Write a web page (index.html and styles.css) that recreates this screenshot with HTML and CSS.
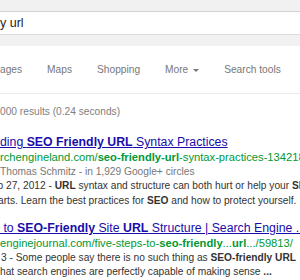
FILE: index.html
```html
<!DOCTYPE html>
<html lang="en">
<head>
    <meta charset="UTF-8">
    <meta name="viewport" content="width=device-width, initial-scale=1.0">
    <title>seo friendly url - Search</title>
    <link rel="stylesheet" href="styles.css">
</head>
<body>
    <div class="topbar">
        <div class="searchbox">y url</div>
    </div>

    <div class="nav">
        <span class="nav-item">ages</span>
        <span class="nav-item">Maps</span>
        <span class="nav-item">Shopping</span>
        <span class="nav-item">More <span class="caret"></span></span>
        <span class="nav-item">Search tools</span>
    </div>

    <div class="stats">000 results (0.24 seconds)</div>

    <div class="result">
        <a class="title" href="#">ding <b>SEO Friendly URL</b> Syntax Practices</a>
        <div class="url">rchengineland.com/<b>seo-friendly-url</b>-syntax-practices-134218</div>
        <div class="byline">Thomas Schmitz - in 1,929 Google+ circles</div>
        <div class="snippet first-line">p 27, 2012 - <b>URL</b> syntax and structure can both hurt or help your <b>SEO</b></div>
        <div class="snippet second-line">arts. Learn the best practices for <b>SEO</b> and how to protect yourself.</div>
    </div>

    <div class="result second">
        <a class="title" href="#">&nbsp;to <b>SEO-Friendly</b> Site <b>URL</b> Structure | Search Engine ...</a>
        <div class="url">enginejournal.com/five-steps-to-<b>seo-friendly</b>...<b>url</b>.../59813/</div>
        <div class="snippet third-line">3 - Some people say there is no such thing as <b>SEO-friendly URL</b></div>
        <div class="snippet">hat search engines are perfectly capable of making sense <b>...</b></div>
    </div>
</body>
</html>
```

FILE: styles.css
```css
/* Página de resultados recortada */
body {
    margin: 0;
    font-family: 'Liberation Sans', Arial, sans-serif;
    background-color: #ffffff;
    overflow: hidden;
    white-space: nowrap;
}

.topbar {
    background-color: #f1f1f1;
    height: 46px;
    padding-top: 11px;
    box-sizing: border-box;
}

.searchbox {
    background-color: #ffffff;
    border-top: 1px solid #d3d3d3;
    border-bottom: 1px solid #dcdcdc;
    height: 22px;
    line-height: 22px;
    font-size: 12.5px;
    color: #222;
}

.nav {
    display: flex;
    align-items: center;
    gap: 25px;
    height: 47px;
    border-bottom: 1px solid #ebebeb;
    font-size: 10.2px;
    color: #777;
}

.caret {
    display: inline-block;
    width: 0;
    height: 0;
    border-left: 3px solid transparent;
    border-right: 3px solid transparent;
    border-top: 3px solid #777;
    vertical-align: middle;
    margin-left: 2px;
}

.stats {
    padding-top: 11px;
    font-size: 10.2px;
    line-height: 14px;
    color: #808080;
}

.result {
    margin-top: 15px;
}

.result.second {
    margin-top: 12px;
}

.title {
    display: block;
    font-size: 12.3px;
    line-height: 16px;
    color: #1a0dab;
    text-decoration: underline;
}

.url {
    font-size: 11.2px;
    line-height: 14.5px;
    color: #093;
}

.byline {
    font-size: 10.2px;
    line-height: 14.5px;
    color: #777;
}

.snippet {
    font-size: 10.2px;
    line-height: 14.5px;
    color: #333;
}

/* letras cortadas na borda esquerda */
.first-line {
    text-indent: -2.5px;
}

.second-line {
    text-indent: -2px;
}

.third-line {
    text-indent: 1px;
}
```
